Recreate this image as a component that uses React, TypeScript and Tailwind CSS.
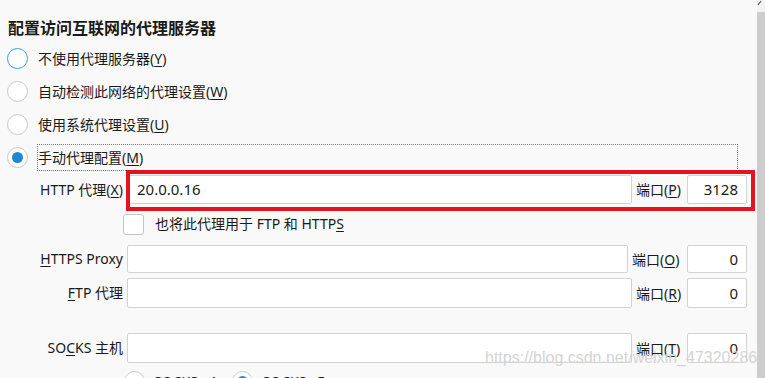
import React from "react";

const font = { fontFamily: '"Noto Sans", "Noto Sans CJK SC", sans-serif' };

function U({ children }: { children: React.ReactNode }) {
  return <span className="underline underline-offset-[2px] decoration-1">{children}</span>;
}

function Radio({ checked, hover }: { checked?: boolean; hover?: boolean }) {
  return (
    <div
      className={`w-[21px] h-[21px] rounded-full bg-white border flex items-center justify-center shrink-0 ${
        hover ? "border-[#3c9be0]" : "border-[#c9c9c9]"
      }`}
    >
      {checked && <div className="w-[11px] h-[11px] rounded-full bg-[#1f88d6]" />}
    </div>
  );
}

function FieldRow({
  label,
  value,
  port,
  portLabel,
  h,
  inputW,
  labelW,
}: {
  label: React.ReactNode;
  value?: string;
  port: string;
  portLabel: React.ReactNode;
  h: string;
  inputW: string;
  labelW: string;
}) {
  return (
    <div className={`flex items-stretch ${h}`}>
      <div className="w-[123px] flex items-center justify-end text-[14px] leading-[20px] text-[#1a1a1a] whitespace-nowrap">
        {label}
      </div>
      <div
        className={`ml-[4px] ${inputW} bg-white border border-[#d2d2d2] rounded-[2px] flex items-center pl-[9px] text-[15px] text-[#1a1a1a]`}
      >
        {value}
      </div>
      <div className={`${labelW} flex items-center pl-[4px] text-[14px] text-[#1a1a1a] whitespace-nowrap`}>
        {portLabel}
      </div>
      <div className="w-[60px] bg-white border border-[#d2d2d2] rounded-[2px] flex items-center justify-end pr-[8px] text-[15px] text-[#1a1a1a]">
        {port}
      </div>
    </div>
  );
}

export default function App() {
  return (
    <div className="w-[765px] h-[378px] bg-[#f9f9f9] relative overflow-hidden flex" style={font}>
      <div className="w-[757px] flex flex-col">
        <div className="mt-[18px] pl-[8px] h-[20px] text-[16px] leading-[20px] font-bold text-[#1a1a1a] whitespace-nowrap">
          配置访问互联网的代理服务器
        </div>
        <div className="mt-[4px] flex flex-col">
          <div className="h-[33px] flex items-center pl-[7px]">
            <Radio hover />
            <span className="ml-[10px] text-[14px] leading-[20px] text-[#1a1a1a]">
              不使用代理服务器(<U>Y</U>)
            </span>
          </div>
          <div className="h-[33px] flex items-center pl-[7px]">
            <Radio />
            <span className="ml-[10px] text-[14px] leading-[20px] text-[#1a1a1a]">
              自动检测此网络的代理设置(<U>W</U>)
            </span>
          </div>
          <div className="h-[33px] flex items-center pl-[7px]">
            <Radio />
            <span className="ml-[10px] text-[14px] leading-[20px] text-[#1a1a1a]">
              使用系统代理设置(<U>U</U>)
            </span>
          </div>
          <div className="h-[33px] flex items-center pl-[7px]">
            <Radio checked />
            <div className="ml-[9px] w-[701px] h-[27px] border border-dotted border-[#7a7a7a] flex items-center text-[14px] leading-[20px] text-[#1a1a1a]">
              手动代理配置(<U>M</U>)
            </div>
          </div>
        </div>

        <div className="mt-[1px]">
          <FieldRow
            h="h-[29px]"
            inputW="w-[505px]"
            labelW="w-[55px]"
            label={<span>HTTP 代理(<U>X</U>)</span>}
            value="20.0.0.16"
            portLabel={<span>端口(<U>P</U>)</span>}
            port="3128"
          />
        </div>

        <div className="mt-[10px] h-[20px] flex items-center pl-[123px]">
          <div className="w-[21px] h-[21px] bg-white border border-[#c4c4c4] rounded-[3px] shrink-0" />
          <span className="ml-[11px] text-[14px] leading-[20px] text-[#1a1a1a] whitespace-nowrap">
            也将此代理用于 FTP 和 HTTP<U>S</U>
          </span>
        </div>

        <div className="mt-[11px]">
          <FieldRow
            h="h-[28px]"
            inputW="w-[501px]"
            labelW="w-[59px]"
            label={<span><U>H</U>TTPS Proxy</span>}
            portLabel={<span>端口(<U>O</U>)</span>}
            port="0"
          />
        </div>
        <div className="mt-[5px]">
          <FieldRow
            h="h-[30px]"
            inputW="w-[505px]"
            labelW="w-[55px]"
            label={<span><U>F</U>TP 代理</span>}
            portLabel={<span>端口(<U>R</U>)</span>}
            port="0"
          />
        </div>
        <div className="mt-[25px]">
          <FieldRow
            h="h-[30px]"
            inputW="w-[505px]"
            labelW="w-[55px]"
            label={<span>SO<U>C</U>KS 主机</span>}
            portLabel={<span>端口(<U>T</U>)</span>}
            port="0"
          />
        </div>
        <div className="mt-[8px] h-[21px] flex items-center pl-[124px]">
          <Radio />
          <span className="ml-[9px] text-[14px] leading-[20px] text-[#1a1a1a]">SOCKS v4</span>
          <div className="ml-[15px]">
            <Radio checked />
          </div>
          <span className="ml-[10px] text-[14px] leading-[20px] text-[#1a1a1a]">SOCKS v5</span>
        </div>
      </div>

      <div className="w-[8px] h-full flex flex-col">
        <div className="h-[12px] bg-[#f3f3f3] relative">
          <svg width="8" height="12" viewBox="0 0 8 12" className="absolute left-0 top-0">
            <path d="M1 5 L4 1" stroke="#555" strokeWidth="1.2" fill="none" />
          </svg>
        </div>
        <div className="flex-1 bg-[#cdcdcd]" />
      </div>

      <div className="absolute left-[126px] top-[170px] w-[629px] h-[41px] border-4 border-[#e5121f] pointer-events-none" />

      <div
        className="absolute left-[485px] top-[349px] text-[16px] leading-[18px] text-[#d4d4d4] whitespace-nowrap pointer-events-none"
        style={{ fontFamily: '"Liberation Sans", Arial, sans-serif' }}
      >
        https://blog.csdn.net/weixin_47320286
      </div>
    </div>
  );
}
